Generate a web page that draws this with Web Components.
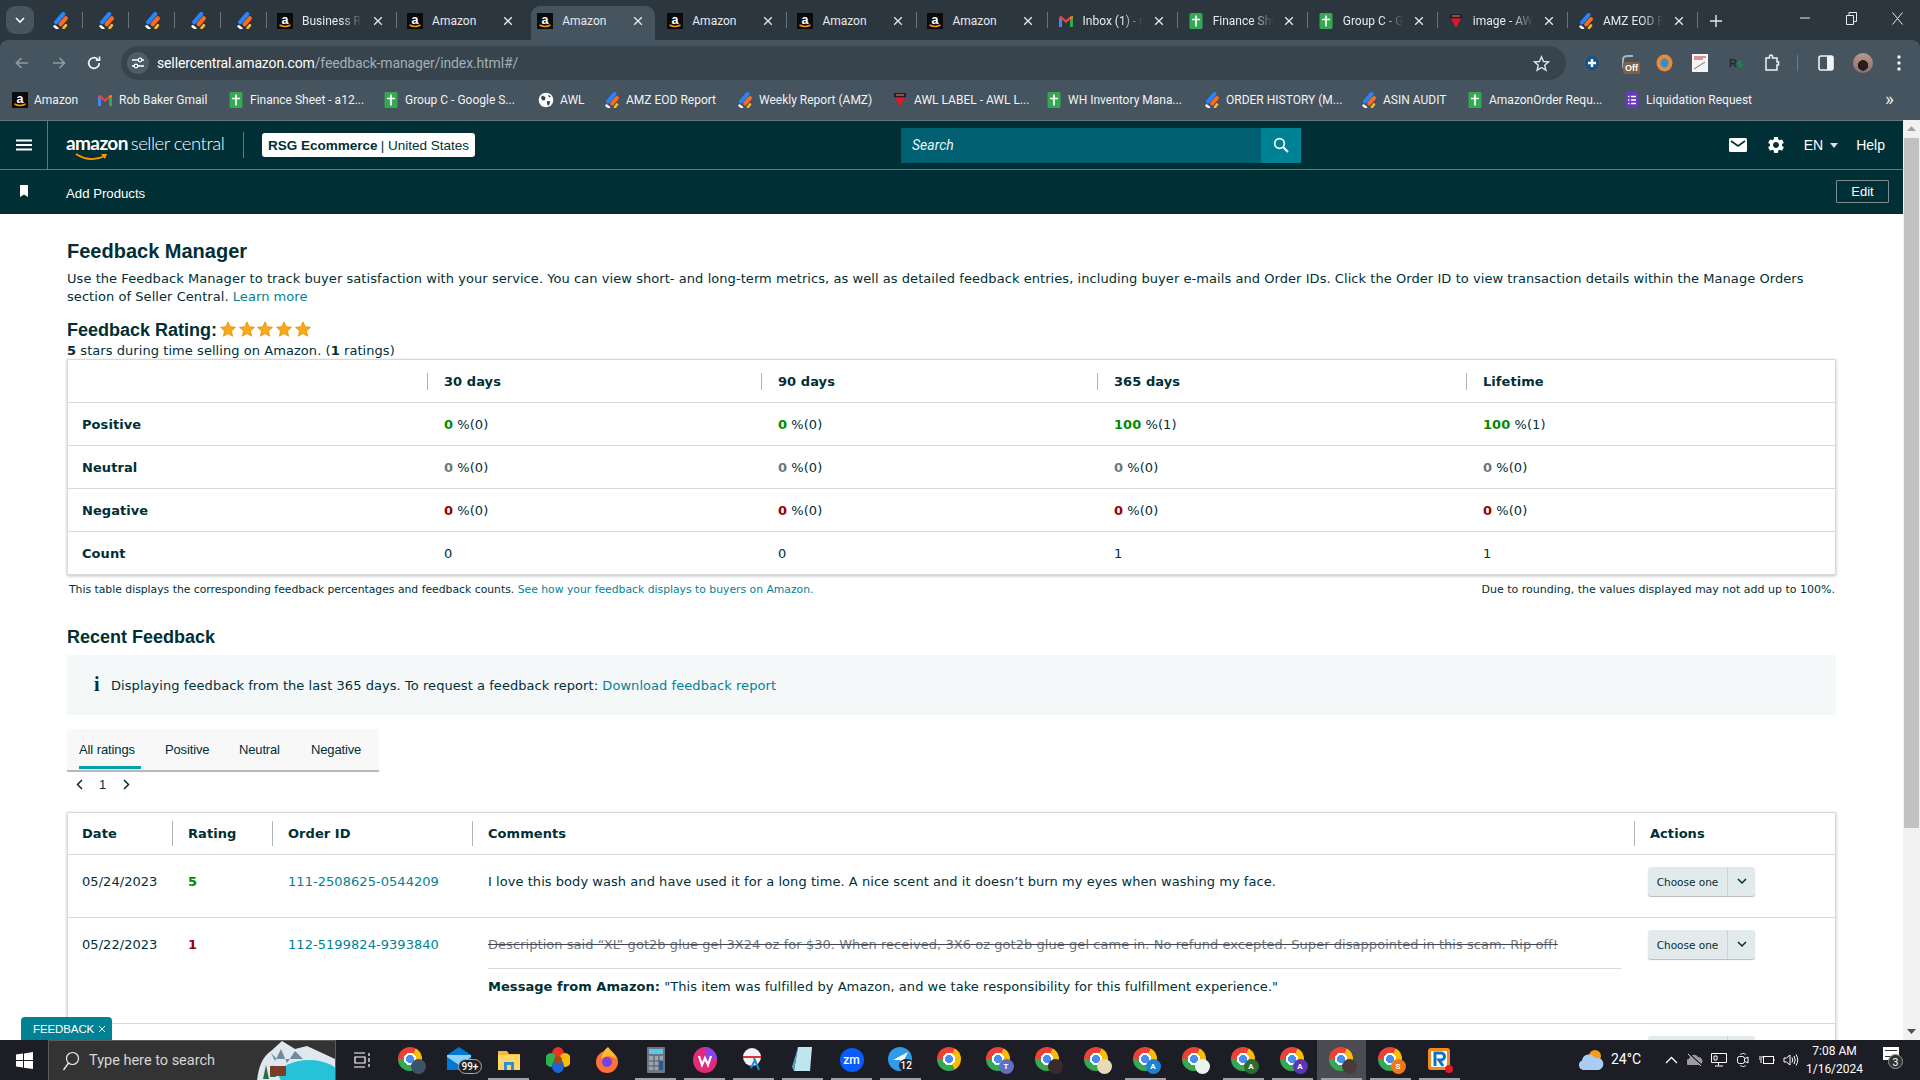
<!DOCTYPE html>
<html lang="en"><head><meta charset="utf-8"><title>Feedback Manager</title>
<style>
html,body{margin:0;height:100%;overflow:hidden;background:#fff}
body{display:flex;flex-direction:column;height:1080px;font-family:"DejaVu Sans",sans-serif}
</style></head><body>
<chrome-frame>
  <tab-strip>
    <pin-tab></pin-tab><pin-tab></pin-tab><pin-tab></pin-tab><pin-tab></pin-tab><pin-tab></pin-tab>
    <browser-tab icon="amazon" fade>Business Report</browser-tab>
    <browser-tab icon="amazon" noend>Amazon</browser-tab>
    <browser-tab icon="amazon" active>Amazon</browser-tab>
    <browser-tab icon="amazon">Amazon</browser-tab>
    <browser-tab icon="amazon">Amazon</browser-tab>
    <browser-tab icon="amazon">Amazon</browser-tab>
    <browser-tab icon="gmail" fade>Inbox (1) - rob</browser-tab>
    <browser-tab icon="sheet" fade>Finance Sheet</browser-tab>
    <browser-tab icon="sheet" fade>Group C - Goo</browser-tab>
    <browser-tab icon="awl" fade>image - AWL</browser-tab>
    <browser-tab icon="multi" fade>AMZ EOD Rep</browser-tab>
  </tab-strip>
  <tool-bar></tool-bar>
  <bookmark-bar>
    <book-mark icon="amazon" w="85">Amazon</book-mark>
    <book-mark icon="gmail" w="131">Rob Baker Gmail</book-mark>
    <book-mark icon="sheet" w="155">Finance Sheet - a12...</book-mark>
    <book-mark icon="sheet" w="155">Group C - Google S...</book-mark>
    <book-mark icon="globe" w="66">AWL</book-mark>
    <book-mark icon="multi" w="133">AMZ EOD Report</book-mark>
    <book-mark icon="multi" w="155">Weekly Report (AMZ)</book-mark>
    <book-mark icon="awl" w="154">AWL LABEL - AWL L...</book-mark>
    <book-mark icon="sheet" w="158">WH Inventory Mana...</book-mark>
    <book-mark icon="multi" w="157">ORDER HISTORY (M...</book-mark>
    <book-mark icon="multi" w="106">ASIN AUDIT</book-mark>
    <book-mark icon="sheet" w="157">AmazonOrder Requ...</book-mark>
    <book-mark icon="forms" w="190">Liquidation Request</book-mark>
  </bookmark-bar>
</chrome-frame>
<view-port>
  <seller-page>
    <seller-header></seller-header>
    <seller-subnav></seller-subnav>
    <feedback-manager></feedback-manager>
    <feedback-tag></feedback-tag>
  </seller-page>
  <win-scrollbar></win-scrollbar>
</view-port>
<win-taskbar></win-taskbar>

<script>
const chromeLogo=(s)=>`<span style="display:block;width:${s}px;height:${s}px;border-radius:50%;background:radial-gradient(circle,#4a8df0 0 24%,#fff 25% 36%,transparent 37%),conic-gradient(from 30deg,#fbbc04 0 120deg,#34a853 120deg 240deg,#ea4335 240deg 360deg)"></span>`;
const ICONS={
 amazon:`<rect width="16" height="16" fill="#0b0b0b"/><text x="8" y="10.5" font-family="Liberation Sans" font-weight="700" font-size="12.5" fill="#fff" text-anchor="middle">a</text><path d="M2.5 12q5.5 3 11 0" stroke="#f90" stroke-width="1.5" fill="none"/>`,
 multi:`<path d="M10.5 2 4 9.5" stroke="#2684ff" stroke-width="4" stroke-linecap="round"/><path d="M13 6 8.2 11.5" stroke="#ff6a1a" stroke-width="4" stroke-linecap="round"/><path d="M2.5 13.5 5 15.5" stroke="#fff" stroke-width="2.4" stroke-linecap="round"/><path d="M13 12.5 11 15" stroke="#fdb92c" stroke-width="2.6" stroke-linecap="round"/>`,
 sheet:`<rect x="1.5" width="13" height="16" rx="1.5" fill="#34a853"/><path d="M8 2.5v11M4 6.5h8" stroke="#fff" stroke-width="1.7"/>`,
 gmail:`<path d="M1 14V4l3 2v8z" fill="#4285f4"/><path d="M15 14V4l-3 2v8z" fill="#34a853"/><path d="M1 4.2 2.8 2.6 8 7l5.2-4.4L15 4.2 8 10z" fill="#ea4335"/><path d="m12 6 3-1.800V3l-3 2z" fill="#fbbc04"/>`,
 globe:`<circle cx="8" cy="8" r="7.300" fill="#fff"/><path d="M4 3.500 7.500 5 7 8 4.500 8.500 3 6zM9 9l3.500.5L10.500 14 9 12zM10 2.500l3 2-2 1z" fill="#37454e"/>`,
 awl:`<rect x="2" y="1" width="12" height="4.500" fill="#2a1a2a"/><path d="M3 5.500h10L8 15z" fill="#e0162b"/><path d="M4 3h8" stroke="#e85" stroke-width="1"/>`,
 forms:`<rect x="1.500" width="13" height="16" rx="1.500" fill="#673ab7"/><path d="M4 4.500h1.500M7 4.500h5M4 8h1.500M7 8h5M4 11.500h1.500M7 11.500h5" stroke="#fff" stroke-width="1.500"/>`
};
const ico=(n,s=16)=>`<svg width="${s}" height="${s}" viewBox="0 0 16 16" style="display:block;flex:none;position:relative">${ICONS[n]}</svg>`;
const def=(name,render)=>customElements.define(name,class extends HTMLElement{
  connectedCallback(){if(this.shadowRoot)return;this.attachShadow({mode:'open'}).innerHTML=render(this)}
});
const X=`<svg width="10" height="10" viewBox="0 0 10 10"><path d="M1.200 1.200l7.600 7.600M8.800 1.200 1.200 8.800" stroke="#e8eaed" stroke-width="1.300"/></svg>`;

def('chrome-frame',()=>`<style>:host{display:block;flex:none;height:120px;background:#2b363e;font-family:Roboto,sans-serif}</style><slot></slot>`);

def('tab-strip',()=>`<style>
:host{display:flex;height:40px;padding-left:6px;box-sizing:border-box;align-items:flex-end}
.s{width:28px;height:28px;margin:0 3px 6px 0;border-radius:9px;background:#45545e;display:flex;align-items:center;justify-content:center;flex:none}
.p{width:30px;display:flex;align-items:center;justify-content:center;height:30px;margin-bottom:4px;color:#e8eaed;font-size:20px;font-weight:300;margin-left:3px}
.w{margin-left:auto;display:flex;height:30px;margin-bottom:7px}
.w span{width:46px;display:flex;align-items:center;justify-content:center}
</style>
<div class="s"><svg width="10" height="7" viewBox="0 0 10 7"><path d="M1 1l4 4 4-4" fill="none" stroke="#fff" stroke-width="1.600"/></svg></div>
<slot></slot>
<div class="p"><svg width="12" height="12" viewBox="0 0 12 12"><path d="M6 0v12M0 6h12" stroke="#e8eaed" stroke-width="1.400"/></svg></div>
<div class="w">
<span><svg width="10" height="2"><path d="M0 1h10" stroke="#e8eaed"/></svg></span>
<span><svg width="11" height="13" viewBox="0 0 11 13"><path d="M.5 3.500h7v9h-7zM3 3.500V.5h7.500v9H7.500" fill="none" stroke="#e8eaed"/></svg></span>
<span><svg width="11" height="13" viewBox="0 0 11 13"><path d="M.5 .5l10 12M10.500 .5l-10 12" stroke="#e8eaed"/></svg></span>
</div>`);

def('pin-tab',()=>`<style>:host{display:flex;width:46px;height:34px;align-items:center;justify-content:center;position:relative;flex:none;padding-bottom:6px;box-sizing:border-box}
i{position:absolute;right:0;top:6px;height:16px;width:1px;background:#66737c}</style>${ico('multi',17)}<i></i>`);

def('browser-tab',(e)=>{const a=e.hasAttribute('active');return `<style>
:host{display:flex;width:130.100px;height:34px;flex:none;position:relative;box-sizing:border-box;align-items:center;padding:0 0 5px 10px;color:#e8eaed;font-size:12px}
.bg{position:absolute;left:4px;right:2px;top:0;bottom:0;background:#45545e;border-radius:9px 9px 0 0;${a?'':'display:none'}}
.t{position:relative;margin-left:9px;width:63px;overflow:hidden;white-space:nowrap;${e.hasAttribute('fade')?'-webkit-mask-image:linear-gradient(90deg,#000 62%,transparent 96%);':''}}
.x{position:absolute;left:106px;top:9px}
i{position:absolute;right:0;top:6px;height:16px;width:1px;background:#66737c;${a||e.hasAttribute('noend')?'display:none':''}}
</style><div class="bg"></div>${ico(e.getAttribute('icon'))}<div class="t"><slot></slot></div><div class="x">${X}</div><i></i>`});

def('tool-bar',()=>`<style>
:host{display:flex;align-items:center;height:40px;background:#45545e;border-radius:8px 8px 0 0;box-sizing:border-box;font-family:Roboto,sans-serif;position:relative}
.b{width:37px;display:flex;align-items:center;justify-content:center;flex:none}
.pill{flex:none;width:1445px;height:34px;margin:6px 0 0 0;background:#37444d;border-radius:17px;display:flex;align-items:center;box-sizing:border-box;padding-left:6px;font-size:14px;color:#a3aeb5;letter-spacing:-.01em}
.site{width:22px;height:22px;border-radius:50%;background:#4d5c66;display:flex;align-items:center;justify-content:center;margin-right:8px;flex:none}
.url b{font-weight:400;color:#fff}
.star{margin-left:auto;margin-right:16px}
.row{display:flex;align-items:center;margin-top:6px}
.tb{width:36px;display:flex;align-items:center;justify-content:center;height:28px;position:relative;flex:none}
.off{position:absolute;left:13px;top:13px;background:#7c6346;color:#fff;font:700 9px "Liberation Sans",sans-serif;padding:1px 2px;border-radius:2px}
.rs{font:700 11px "Liberation Sans",sans-serif;color:#1d2a30}.rs u{text-decoration:none;color:#1a8f4a}
.sep{width:1px;height:16px;background:#6f7c85;margin:0 8px;flex:none}
</style>
<div class="row" style="margin-left:3px">
<div class="b"><svg width="16" height="16" viewBox="0 0 16 16"><path d="M14 8H3M7.500 3 2.500 8l5 5" fill="none" stroke="#8e9aa2" stroke-width="1.700"/></svg></div>
<div class="b"><svg width="16" height="16" viewBox="0 0 16 16"><path d="M2 8h11M8.500 3l5 5-5 5" fill="none" stroke="#8e9aa2" stroke-width="1.700"/></svg></div>
<div class="b" style="margin-left:-2px"><svg width="16" height="16" viewBox="0 0 16 16"><path d="M13.300 8a5.300 5.300 0 1 1-1.600-3.800M13.500 1.500v3.700H9.800" fill="none" stroke="#f1f3f4" stroke-width="1.700"/></svg></div>
</div>
<div class="pill" style="margin-left:9px">
<div class="site"><svg width="14" height="14" viewBox="0 0 14 14"><path d="M1 4h6M11 4h2M1 10h2M7 10h6" stroke="#fff" stroke-width="1.300"/><circle cx="9" cy="4" r="1.800" fill="none" stroke="#fff" stroke-width="1.200"/><circle cx="5" cy="10" r="1.800" fill="none" stroke="#fff" stroke-width="1.200"/></svg></div>
<span class="url"><b>sellercentral.amazon.com</b>/feedback-manager/index.html#/</span>
<svg class="star" width="17" height="17" viewBox="0 0 17 17"><path d="M8.500 1.800l2 4.700 5 .4-3.800 3.300 1.200 5-4.400-2.700-4.400 2.700 1.200-5L1.500 6.900l5-.4z" fill="none" stroke="#dfe3e6" stroke-width="1.400"/></svg>
</div>
<div class="row" style="margin-left:8px">
<div class="tb"><svg width="14" height="16" viewBox="0 0 14 16"><ellipse cx="7" cy="8" rx="6.500" ry="7.500" fill="#12558c"/><path d="M7 4v8M3 8h8" stroke="#fff" stroke-width="2.400"/></svg></div>
<div class="tb"><svg width="14" height="18" viewBox="0 0 14 18"><path d="M2 14V5q0-3 5-3h5" fill="none" stroke="#aeb6bb" stroke-width="1.800"/></svg><span class="off">Off</span></div>
<div class="tb"><svg width="17" height="18" viewBox="0 0 17 18"><ellipse cx="8.500" cy="9" rx="8" ry="8.500" fill="#e88b3a"/><ellipse cx="8.500" cy="9" rx="4" ry="4.500" fill="#2f8fd2"/></svg></div>
<div class="tb"><svg width="16" height="18" viewBox="0 0 16 18"><rect width="16" height="18" fill="#f4f4f4"/><path d="M2 3h12M2 5h9" stroke="#b33" /><path d="M2 15 13 8" stroke="#777"/></svg></div>
<div class="tb"><span class="rs">R<u>s</u></span></div>
<div class="tb" style="margin-left:-1px"><svg width="17" height="18" viewBox="0 0 17 18"><path d="M3 4h3.500V2.500a1.500 1.500 0 0 1 3 0V4H14v4h1.500v3H14v5H3z" fill="none" stroke="#f1f3f4" stroke-width="1.500"/></svg></div>
<div class="sep"></div>
<div class="tb" style="width:34px;margin-left:3px"><svg width="16" height="16" viewBox="0 0 16 16"><rect x="1" y="1" width="14" height="14" rx="2" fill="none" stroke="#f1f3f4" stroke-width="1.600"/><rect x="9" y="1" width="6" height="14" fill="#f1f3f4"/></svg></div>
<div class="tb" style="width:36px;margin-left:2px"><span style="width:20px;height:20px;border-radius:50%;display:block;background:radial-gradient(circle at 50% 62%,#2a1d1e 0 32%,transparent 34%),linear-gradient(#b89a8c,#8c6f67)"></span></div>
<div class="tb" style="width:36px"><svg width="4" height="16" viewBox="0 0 4 16"><circle cx="2" cy="2" r="1.700" fill="#f1f3f4"/><circle cx="2" cy="8" r="1.700" fill="#f1f3f4"/><circle cx="2" cy="14" r="1.700" fill="#f1f3f4"/></svg></div>
</div>`);

def('bookmark-bar',()=>`<style>:host{display:flex;align-items:center;height:40px;background:#45545e;padding-left:12px;box-sizing:border-box;position:relative;padding-top:0}
.m{position:absolute;right:26px;top:11px;color:#e8eaed;font-size:19px;line-height:16px}</style><slot></slot><div class="m">»</div>`);

def('book-mark',(e)=>`<style>:host{display:flex;align-items:center;gap:6px;width:${e.getAttribute('w')}px;flex:none;color:#f1f3f4;font-size:12px;white-space:nowrap;box-sizing:border-box}</style>${ico(e.getAttribute('icon'))}<slot></slot>`);

def('view-port',()=>`<style>:host{display:flex;flex:none;height:920px;overflow:hidden}</style><slot></slot>`);

def('seller-page',()=>`<style>:host{display:block;flex:1;min-width:0;position:relative;overflow:hidden;background:#fff}</style><slot></slot>`);

def('seller-header',()=>`<style>
:host{display:flex;align-items:center;height:50px;background:#002f36;border-top:1px solid #66777c;border-bottom:1px solid #66777c;box-sizing:border-box;color:#fff;font:14px "Liberation Sans",sans-serif}
.h{width:47px;height:100%;border-right:1px solid #66777c;display:flex;align-items:center;justify-content:center;flex:none}
.l{margin-left:18px;width:159px;position:relative;flex:none;height:40px;font-family:Lato,sans-serif;white-space:nowrap;color:#fff;line-height:36px}
.l b{font-size:19px;letter-spacing:-.6px;font-weight:700}.l span{font-size:18.500px;font-weight:300;letter-spacing:-.5px;margin-left:3px}
.l svg{position:absolute;left:9px;top:28px}
.d{width:1px;height:26px;background:#66777c;margin-left:18px;flex:none}
.a{margin-left:18px;width:213px;height:24px;background:#fff;border-radius:3px;color:#002f36;display:flex;align-items:center;justify-content:center;flex:none;font-size:13.500px;white-space:nowrap}
.a b{margin-right:3px;font-weight:600}
.s{margin-left:426px;width:400px;height:35px;background:#005f70;display:flex;flex:none;font:italic 14px Roboto,sans-serif;align-items:center;padding-left:11px;box-sizing:border-box;position:relative;color:#e6f6f7}
.s div{position:absolute;right:0;top:0;width:40px;height:35px;background:#008296;display:flex;align-items:center;justify-content:center}
.r{margin-left:auto;display:flex;align-items:center}
.c{margin:0 0 0 9px;width:0;height:0;border:4px solid transparent;border-top:5px solid #d8e0e2;border-bottom:0}
</style>
<div class="h"><svg width="16" height="12" viewBox="0 0 16 12"><path d="M0 1.500h16M0 6h16M0 10.500h16" stroke="#fff" stroke-width="1.800"/></svg></div>
<div class="l"><b>amazon</b><span>seller central</span><svg width="34" height="8" viewBox="0 0 34 8"><path d="M1 1q14 9 29 2" fill="none" stroke="#f90" stroke-width="1.800"/><path d="M26 1l6 0-2 5z" fill="#f90"/></svg></div>
<div class="d"></div>
<div class="a"><b>RSG Ecommerce</b>| United States</div>
<div class="s">Search<div><svg width="16" height="16" viewBox="0 0 16 16"><circle cx="6.500" cy="6.500" r="4.800" fill="none" stroke="#fff" stroke-width="1.700"/><path d="M10 10l5 5" stroke="#fff" stroke-width="2"/></svg></div></div>
<div class="r">
<svg width="18" height="14" viewBox="0 0 18 14"><rect width="18" height="14" rx="1.500" fill="#fff"/><path d="M2 3l7 5 7-5" fill="none" stroke="#002f36" stroke-width="1.600"/></svg>
<svg style="margin-left:19px" width="20" height="20" viewBox="0 0 24 24"><path fill="#fff" d="M19.140 12.940c.04-.3.06-.61.06-.94 0-.32-.02-.64-.07-.94l2.030-1.580a.49.49 0 0 0 .12-.61l-1.920-3.320a.488.488 0 0 0-.59-.22l-2.390.96c-.5-.38-1.030-.7-1.620-.94l-.36-2.540a.484.484 0 0 0-.48-.41h-3.840c-.24 0-.43.17-.47.41l-.36 2.540c-.59.24-1.130.57-1.620.94l-2.390-.96c-.22-.08-.47 0-.59.22L2.740 8.870c-.12.21-.08.47.12.61l2.030 1.580c-.05.3-.09.63-.09.94s.02.64.07.94l-2.030 1.580a.49.49 0 0 0-.12.61l1.920 3.320c.12.22.37.29.59.22l2.390-.96c.5.38 1.030.7 1.620.94l.36 2.540c.05.24.24.41.48.41h3.840c.24 0 .44-.17.47-.41l.36-2.540c.59-.24 1.130-.56 1.620-.94l2.390.96c.22.08.47 0 .59-.22l1.920-3.320c.12-.22.07-.47-.12-.61l-2.010-1.580zM12 15.600c-1.980 0-3.600-1.620-3.600-3.600s1.620-3.600 3.600-3.600 3.600 1.620 3.600 3.600-1.620 3.600-3.600 3.600z"/></svg>
<span style="margin-left:18px">EN</span><i class="c" style="margin-left:7px"></i>
<span style="margin:0 18px 0 18px">Help</span>
</div>`);

def('seller-subnav',()=>`<style>
:host{display:flex;align-items:center;height:44px;background:#002f36;color:#fff;font:13.200px "Liberation Sans",sans-serif;position:relative;padding-left:19px;box-sizing:border-box}
span{margin-left:37px;margin-top:2px}
.e{margin-left:auto;margin-right:14px;width:53px;height:23px;margin-top:-1px;border:1px solid #7c8c90;display:flex;align-items:center;justify-content:center;box-sizing:border-box;font-size:13px;border-radius:1px}
svg{margin-top:-2px}
</style><svg width="10" height="12" viewBox="0 0 10 12"><path d="M1 0h8v12L5 9.500 1 12z" fill="#fff"/></svg><span>Add Products</span><div class="e">Edit</div>`);

def('star-row',()=>`<style>:host{display:inline-flex;gap:2.700px;vertical-align:-1px;margin-left:3px}</style>`+Array(5).fill(`<svg width="16" height="16" viewBox="0 0 16 16"><path d="M8 .8l2.200 4.900 5.300.6-4 3.600 1.100 5.300L8 12.500l-4.600 2.700 1.100-5.300-4-3.600 5.300-.6z" fill="#f9a915" stroke="#d98d00" stroke-width=".7"/></svg>`).join(''));

def('metrics-table',()=>{
 const cols='359px 334px 336px 369px 1fr';
 const g='#008a00',n='#6c7778',r='#990000';
 const row=(l,c,v)=>`<div class="r"><div class="c l">${l}</div>${v.map(x=>`<div class="c"><b style="color:${c}">${x[0]}</b> %(${x[1]})</div>`).join('')}</div>`;
 return `<style>
:host{display:block;border:1px solid #d5dbdb;box-shadow:0 1px 3px rgba(0,0,0,.25);font:13px "DejaVu Sans",sans-serif;letter-spacing:.06px;color:#002f36;background:#fff;box-sizing:border-box;height:216px}
.r{display:grid;grid-template-columns:${cols};height:43px;align-items:center;border-bottom:1px solid #d5dbdb;box-sizing:border-box}
.r:last-child{border-bottom:0}
.c{padding-left:17px;white-space:nowrap}
.l{padding-left:14px;font-weight:700}
.h{font-weight:700;position:relative}
.h.d::before{content:"";position:absolute;left:0;top:-1px;bottom:-1px;width:1px;background:#aab7b8}
.c b{font-weight:700}
.c.cnt{color:#002f36}
</style>
<div class="r"><div></div>${['30 days','90 days','365 days','Lifetime'].map(t=>`<div class="c h d">${t}</div>`).join('')}</div>
${row('Positive',g,[[0,0],[0,0],[100,1],[100,1]])}
${row('Neutral',n,[[0,0],[0,0],[0,0],[0,0]])}
${row('Negative',r,[[0,0],[0,0],[0,0],[0,0]])}
<div class="r"><div class="c l">Count</div><div class="c cnt">0</div><div class="c cnt">0</div><div class="c cnt">1</div><div class="c cnt">1</div></div>`});

def('rating-tabs',()=>`<style>
:host{display:flex;width:312px;height:43px;background:#f8f8f8;border-bottom:2px solid #b5b9ba;box-sizing:border-box;font:13px "Liberation Sans",sans-serif;color:#002f36;position:relative;padding:0 0 0 12px;align-items:center}
span{margin-top:-1px;white-space:nowrap;letter-spacing:-.15px}
i{position:absolute;left:12px;bottom:1px;width:62px;height:3px;background:#00a1b0}
</style><span style="width:86px;letter-spacing:-.1px">All ratings</span><span style="width:74px">Positive</span><span style="width:72px">Neutral</span><span>Negative</span><i></i>`);

def('page-nav',()=>`<style>:host{display:flex;align-items:center;height:24px;padding-left:9px;font:13px "Liberation Sans",sans-serif;color:#002f36}
span{width:14px;margin:0 0 0 16px;}svg{flex:none}</style>
<svg width="7" height="11" viewBox="0 0 7 11"><path d="M6 1 1.500 5.500 6 10" fill="none" stroke="#002f36" stroke-width="1.500"/></svg><span>1</span>
<svg style="margin-left:10px" width="7" height="11" viewBox="0 0 7 11"><path d="M1 1l4.500 4.500L1 10" fill="none" stroke="#002f36" stroke-width="1.500"/></svg>`);

def('action-button',(e)=>`<style>:host{display:flex;width:107px;height:29px;background:#e3eaeb;border-radius:3px;box-shadow:0 1px 1px rgba(0,0,0,.28);font:10.500px "DejaVu Sans",sans-serif;letter-spacing:0;color:#002f36;box-sizing:border-box}
.a{width:79px;display:flex;align-items:center;justify-content:center;border-right:1px solid #ccd5d6}
.b{flex:1;display:flex;align-items:center;justify-content:center}</style>
<div class="a"><slot></slot></div><div class="b"><svg width="10" height="7" viewBox="0 0 10 7"><path d="M1 1l4 4 4-4" fill="none" stroke="#002f36" stroke-width="1.500"/></svg></div>`);

def('feedback-table',()=>{
 const cols='104px 100px 200px 1162px 1fr';
 return `<style>
:host{display:block;border:1px solid #d5dbdb;border-bottom:0;box-shadow:0 1px 3px rgba(0,0,0,.25);font:13px "DejaVu Sans",sans-serif;letter-spacing:.05px;color:#002f36;background:#fff;box-sizing:border-box}
.r{display:grid;grid-template-columns:${cols};border-bottom:1px solid #d5dbdb;box-sizing:border-box;line-height:18px}
.hd{height:42px;align-items:center;font-weight:700}
.hd div{position:relative;padding:1px 0 0 16px}
.hd div.f{padding-left:14px}
.hd div.v::before{content:"";position:absolute;left:0;top:-3px;bottom:-3px;width:1px;background:#aab7b8}
.b{padding:18px 0 0 16px;white-space:nowrap;box-sizing:border-box}
.b.f{padding-left:14px}
a{color:#008296;text-decoration:none}
.g{color:#008a00;font-weight:700}.x{color:#990000;font-weight:700}
s{color:#6c7778;text-decoration-color:#445}
.m{border-top:1px solid #d5dbdb;margin:14px 13px 0 0;padding-top:9px;white-space:nowrap}
.a{padding:12px 0 0 14px}
</style>
<div class="r hd" style="grid-template-columns:${cols}"><div class="f">Date</div><div class="v">Rating</div><div class="v">Order ID</div><div class="v">Comments</div><div class="v">Actions</div></div>
<div class="r" style="height:63px"><div class="b f">05/24/2023</div><div class="b"><span class="g">5</span></div><div class="b"><a>111-2508625-0544209</a></div><div class="b">I love this body wash and have used it for a long time. A nice scent and it doesn’t burn my eyes when washing my face.</div><div class="a"><action-button>Choose one</action-button></div></div>
<div class="r" style="height:106px"><div class="b f">05/22/2023</div><div class="b"><span class="x">1</span></div><div class="b"><a>112-5199824-9393840</a></div><div class="b"><s>Description said “XL” got2b glue gel 3X24 oz for $30. When received, 3X6 oz got2b glue gel came in. No refund excepted. Super disappointed in this scam. Rip off!</s><div class="m"><b>Message from Amazon:</b> "This item was fulfilled by Amazon, and we take responsibility for this fulfillment experience."</div></div><div class="a"><action-button>Choose one</action-button></div></div>
<div class="r" style="height:40px;border-bottom:0"><div></div><div></div><div></div><div></div><div class="a"><action-button></action-button></div></div>`});

def('feedback-manager',()=>`<style>
:host{display:block;padding:24px 67px 0;font:13px/18px "DejaVu Sans",sans-serif;color:#002f36;width:1769px;box-sizing:content-box}
h1{font:700 20px/26px "Liberation Sans",sans-serif;margin:0 0 6px}
.p{letter-spacing:.06px;white-space:nowrap}
.st{letter-spacing:.06px;line-height:17px}
a{color:#008296;text-decoration:none}
h2{font:700 18px/22px "Liberation Sans",sans-serif;margin:13px 0 1px;white-space:nowrap}
.fn{display:flex;justify-content:space-between;margin:7px 1px 0 2px;font-size:10.800px;line-height:16px}
.fn span+span{font-size:11px}
.rf{margin:27px 0 6px;line-height:24px}
.band{height:60px;background:#f5f8f9;display:flex;align-items:center;padding:1px 0 0 27px;box-sizing:border-box;letter-spacing:.06px}
.band i{font:700 20px "Liberation Serif",serif;width:17px;font-style:normal;color:#002f36;margin-top:-3px}
rating-tabs{margin-top:14px}
feedback-table{margin-top:16px}
</style>
<h1>Feedback Manager</h1>
<div class="p">Use the Feedback Manager to track buyer satisfaction with your service. You can view short- and long-term metrics, as well as detailed feedback entries, including buyer e-mails and Order IDs. Click the Order ID to view transaction details within the Manage Orders</div>
<div class="p"><span>section of Seller Central.</span> <a>Learn more</a></div>
<h2>Feedback Rating:<star-row></star-row></h2>
<div class="st"><b>5</b> stars during time selling on Amazon. (<b>1</b> ratings)</div>
<metrics-table></metrics-table>
<div class="fn"><span>This table displays the corresponding feedback percentages and feedback counts. <a>See how your feedback displays to buyers on Amazon.</a></span><span>Due to rounding, the values displayed may not add up to 100%.</span></div>
<h2 class="rf">Recent Feedback</h2>
<div class="band"><i>i</i><span>Displaying feedback from the last 365 days. To request a feedback report: <a>Download feedback report</a></span></div>
<rating-tabs></rating-tabs>
<page-nav></page-nav>
<feedback-table></feedback-table>`);

def('feedback-tag',()=>`<style>:host{position:absolute;left:21px;bottom:0;width:91px;height:23px;background:#008296;color:#fff;font:11.500px "Liberation Sans",sans-serif;border-radius:4px 4px 0 0;display:flex;align-items:center;padding-left:12px;box-sizing:border-box;gap:4px;letter-spacing:-.1px}
</style>FEEDBACK<svg width="8" height="8" viewBox="0 0 8 8"><path d="M1 1l6 6M7 1 1 7" stroke="#fff" stroke-width="1"/></svg>`);

def('win-scrollbar',()=>`<style>:host{display:flex;flex-direction:column;width:17px;flex:none;background:#f1f1f1;align-items:center}
.t{width:15px;height:690px;background:#c1c1c1;margin-top:1px}
.a{height:17px;display:flex;align-items:center;justify-content:center;flex:none}
.s{flex:1}</style>
<div class="a"><svg width="9" height="5"><path d="M4.500 0 9 5H0z" fill="#a3a3a3"/></svg></div><div class="t"></div><div class="s"></div>
<div class="a"><svg width="9" height="5"><path d="M0 0h9L4.500 5z" fill="#505050"/></svg></div>`);

def('task-app',(e)=>{
 const run=e.hasAttribute('run'),act=e.hasAttribute('active');
 return `<style>:host{display:flex;width:49px;height:40px;align-items:center;justify-content:center;position:relative;flex:none;${act?'background:#4b4c52;':''}font-family:Roboto,sans-serif}
i{position:absolute;left:4px;right:4px;bottom:0;height:2px;background:#9fa2a8;${run||act?'':'display:none'}}
</style><slot></slot><i></i>`});

def('chrome-app',(e)=>{
 const c=e.getAttribute('c'),l=e.getAttribute('l')||'';
 return `<style>:host{display:block;position:relative;width:26px;height:26px}
.b{position:absolute;right:-2px;bottom:-1px;width:15px;height:15px;border-radius:50%;background:${c||'none'};color:#fff;font:700 8px Roboto,sans-serif;display:flex;align-items:center;justify-content:center}
</style>${chromeLogo(24)}${c?`<span class="b">${l}</span>`:''}`});

def('win-taskbar',()=>{
 const chrome=(attrs,c,l)=>`<task-app ${attrs}><chrome-app ${c?`c="${c}" l="${l||''}"`:''}></chrome-app></task-app>`;
 return `<style>
:host{display:flex;flex:none;height:40px;background:#1d1d26;color:#fff;font-family:Roboto,sans-serif;align-items:stretch;position:relative}
.st{width:48px;display:flex;align-items:center;justify-content:center;flex:none}
.se{width:288px;flex:none;background:#333;border:1px solid #5b5b5b;border-width:1px 1px 0;box-sizing:border-box;display:flex;align-items:center;padding-left:13px;color:#d6d6d6;font-size:14.500px;position:relative;overflow:hidden;margin-right:1px}
.se span{margin-left:9px}
.se svg.p{position:absolute;right:0;top:0}
.ap{display:flex}
.tr{margin-left:auto;display:flex;align-items:center;flex:none}
.s{width:24px;display:flex;justify-content:center;flex:none}
.tm{width:50px;padding-left:2px;font-size:14px;box-sizing:border-box;margin-top:-3px}
.ck{width:63px;text-align:center;font-size:12px;line-height:18px}
.nt{width:50px;position:relative;height:40px}
.nt span{position:absolute;left:17px;top:7px;width:16px;height:13px;background:#fff}
.nt span::before{content:"";position:absolute;left:2px;top:3px;width:12px;height:5px;border:solid #333;border-width:1px 0}
.nt u{position:absolute;left:22px;top:14px;width:15px;height:15px;border-radius:50%;background:#333;border:1px solid #999;font-size:10.500px;text-decoration:none;text-align:center;line-height:15px;box-sizing:border-box}
.ln{width:1px;background:#666;margin-left:0;flex:none}
.bd{position:absolute;background:#222;border:1px solid #aaa;border-radius:9px;font-size:10px;font-weight:500;color:#fff;padding:0 3px;line-height:13px}
.rel{position:relative;display:block}
.pad{width:3px;flex:none}
</style>
<div class="st"><svg width="17" height="17" viewBox="0 0 17 17"><path d="M0 2.600 7 1.600v6.500H0zM8 1.500 17 0v8.100H8zM0 9h7v6.500L0 14.500zM8 9h9v8L8 15.700z" fill="#fff"/></svg></div>
<div class="se"><svg width="18" height="20" viewBox="0 0 18 20"><circle cx="10.500" cy="7.500" r="6" fill="none" stroke="#eee" stroke-width="1.200"/><path d="M6.500 12 1.500 19" stroke="#eee" stroke-width="1.300"/></svg><span>Type here to search</span>
<svg class="p" width="78" height="40" viewBox="0 0 78 40"><path d="M0 40Q2 18 14 10L25 0 38 8 50 5 78 18V40z" fill="#dfe8ee"/><path d="M14 12l4 8 6-12 6 14 8-12 8 8H20z" fill="#6f8c9c"/><ellipse cx="52" cy="34" rx="30" ry="15" fill="#26c2d8"/><path d="M6 38l3-14 3 14zM13 36l3-12 3 12z" fill="#2b6f40"/><rect x="13" y="25" width="16" height="10" fill="#7b3d2a"/><path d="M0 40h78v-1H0z" fill="#1ea5bd"/></svg></div>
<div class="ap">
<task-app><svg width="16" height="16" viewBox="0 0 16 16"><path d="M0 1h11M0 15h11M1 5h10v6H1zM15 1v3M15 6v4M15 12v3" fill="none" stroke="#fff" stroke-width="1.200"/></svg></task-app>
${chrome('','#3b5368')}
<task-app><span class="rel" style="width:26px;height:26px"><svg width="24" height="24" viewBox="0 0 24 24"><path d="M0 8 12 0l12 8v15H0z" fill="#0078d4"/><path d="M0 8h24v2L12 18 0 10z" fill="#8fd0f8"/></svg><span class="bd" style="left:11px;top:12px">99+</span></span></task-app>
<task-app run><svg width="22" height="20" viewBox="0 0 22 20"><path d="M0 1h9l2 3h11v4H0z" fill="#f3b93a"/><rect y="5" width="22" height="15" fill="#ffd766"/><rect x="6" y="12" width="10" height="8" fill="#2d8fd6"/><rect x="9" y="15" width="4" height="5" fill="#ffd766"/></svg></task-app>
<task-app><svg width="24" height="26" viewBox="0 0 24 26"><ellipse cx="12" cy="7" rx="6" ry="7" fill="#ea3323"/><ellipse cx="5" cy="13" rx="6" ry="7" fill="#2eb24b"/><ellipse cx="19" cy="13" rx="6" ry="7" fill="#fbbc04"/><ellipse cx="12" cy="19" rx="6" ry="7" fill="#1a66d6"/><circle cx="12" cy="13" r="4" fill="#a2481d"/></svg></task-app>
<task-app><svg width="24" height="26" viewBox="0 0 24 26"><circle cx="12" cy="15" r="11" fill="#ff7139"/><path d="M13 0q6 6 9 12Q12 6 6 12q2-9 7-12z" fill="#ffbd2e"/><circle cx="12" cy="15" r="5" fill="#7542e5"/></svg></task-app>
<task-app run><svg width="18" height="26" viewBox="0 0 18 26"><rect width="18" height="26" rx="1" fill="#6b7680"/><rect x="2" y="2" width="14" height="5" fill="#5dc8ec"/><path d="M2 9h14v14H2z" fill="#9aa5ae"/><path d="M7 9v14M12 9v14M2 14h14M2 19h14" stroke="#556"/><rect x="12" y="14" width="4" height="9" fill="#215a9e"/></svg></task-app>
<task-app run><svg width="24" height="26" viewBox="0 0 24 26"><ellipse cx="12" cy="13" rx="12" ry="13" fill="#e32a7a"/><path d="M12 0a12 13 0 0 1 12 13L12 13z" fill="#8a41e6"/><path d="M6 9l3 9 3-7 3 7 3-9" fill="none" stroke="#fff" stroke-width="2.200"/></svg></task-app>
<task-app run><svg width="24" height="24" viewBox="0 0 24 24"><circle cx="10" cy="9" r="9" fill="#f3f3f3"/><path d="M1 9h18" stroke="#d33" stroke-width="2"/><path d="M12 10l5 12M13 12l-4 8" stroke="#1e88d2" stroke-width="2"/></svg></task-app>
<task-app run><svg width="22" height="26" viewBox="0 0 22 26"><path d="M6 0h14l-2 24H2z" fill="#bfe6ef"/><path d="M6 0 2 24l-2-4z" fill="#58a7bd"/></svg></task-app>
<task-app run><span style="display:flex;width:24px;height:24px;border-radius:50%;background:#0b5cff;color:#fff;font-size:12px;font-weight:500;align-items:center;justify-content:center">zm</span></task-app>
<task-app run><span class="rel" style="width:26px;height:26px"><svg width="24" height="24" viewBox="0 0 24 24"><circle cx="12" cy="12" r="12" fill="#2f9bea"/><path d="M5 13 20 5l-6 12-2-4z" fill="#fff"/></svg><span class="bd" style="left:11px;top:12px;border:0;padding:0 2px">12</span></span></task-app>
${chrome('')}
${chrome('','#5f6fc4','T')}
${chrome('','#3b2a2a')}
${chrome('','#e8d9b8')}
${chrome('run','#1f7fd0','A')}
${chrome('','#eaf5ea')}
${chrome('run','#2e6b2e','A')}
${chrome('run','#5b36b5','A')}
${chrome('active','#4a3b3b')}
${chrome('run','#ef7a14','S')}
<task-app run><span class="rel" style="width:26px;height:26px"><svg width="26" height="26" viewBox="0 0 26 26"><rect x="1" y="1" width="22" height="22" rx="3" fill="#f38a1e"/><rect x="4" y="4" width="16" height="16" rx="1" fill="#fff"/><path d="M8 19V6h6a3.500 3.500 0 0 1 0 7h-2l4 6" fill="none" stroke="#1271c4" stroke-width="3"/><circle cx="22" cy="22" r="4" fill="#e01b24"/></svg></span></task-app>
</div>
<div class="tr">
<div style="width:36px;display:flex;justify-content:center"><svg width="26" height="22" viewBox="0 0 26 22"><circle cx="17" cy="7" r="6" fill="#f79a1f"/><path d="M5 21a5 5 0 0 1-1-9.500A7 7 0 0 1 17 9a5 5 0 0 1 4 12z" fill="#a9ccf2"/></svg></div>
<div class="tm">24°C</div>
<div class="s"><svg width="13" height="8" viewBox="0 0 13 8"><path d="M1 7l5.500-5.500L12 7" fill="none" stroke="#fff" stroke-width="1.300"/></svg></div>
<div class="s"><svg width="16" height="14" viewBox="0 0 16 14"><path d="M2 12a3 3 0 0 1 0-6 5 5 0 0 1 9-2 4 4 0 0 1 3 7l-1 1z" fill="#9a9a9f"/><path d="M2 1l13 12" stroke="#1d1d26" stroke-width="2"/><path d="M1 1l13 12" stroke="#ddd"/></svg></div>
<div class="s"><svg width="16" height="14" viewBox="0 0 16 14"><path d="M.5 .5h15v9H.5zM7.500 9.500v3M4 13h8M3 3h3v4H3z" fill="none" stroke="#fff"/></svg></div>
<div class="s"><svg width="12" height="16" viewBox="0 0 12 16"><path d="M3 2.500Q6 0 9 2.500M3 13.500q3 2.500 6 0" fill="none" stroke="#ccc"/><rect x=".5" y="4.500" width="7" height="7" rx="2" fill="none" stroke="#fff"/><path d="M8 6.500l3-1.500v6l-3-1.500" fill="none" stroke="#fff"/></svg></div>
<div class="s"><svg width="16" height="12" viewBox="0 0 16 12"><rect x="4.500" y="2.500" width="10" height="7" fill="none" stroke="#fff"/><path d="M15 5v2" stroke="#fff"/><path d="M0 5h3M1 2v2M3 2v2M2 6v3" stroke="#fff"/></svg></div>
<div class="s"><svg width="16" height="14" viewBox="0 0 16 14"><path d="M1 5h2.500L7 2v10L3.500 9H1z" fill="none" stroke="#fff"/><path d="M9 4.500q1.500 2.500 0 5M11 3q2.500 4 0 8M13 1.500q3.500 5.500 0 11" fill="none" stroke="#fff"/></svg></div>
<div class="ck">7:08 AM<br>1/16/2024</div>
<div class="nt"><span></span><u>3</u></div>
<div class="ln"></div><div class="pad"></div>
</div>`});
</script>
</body></html>
